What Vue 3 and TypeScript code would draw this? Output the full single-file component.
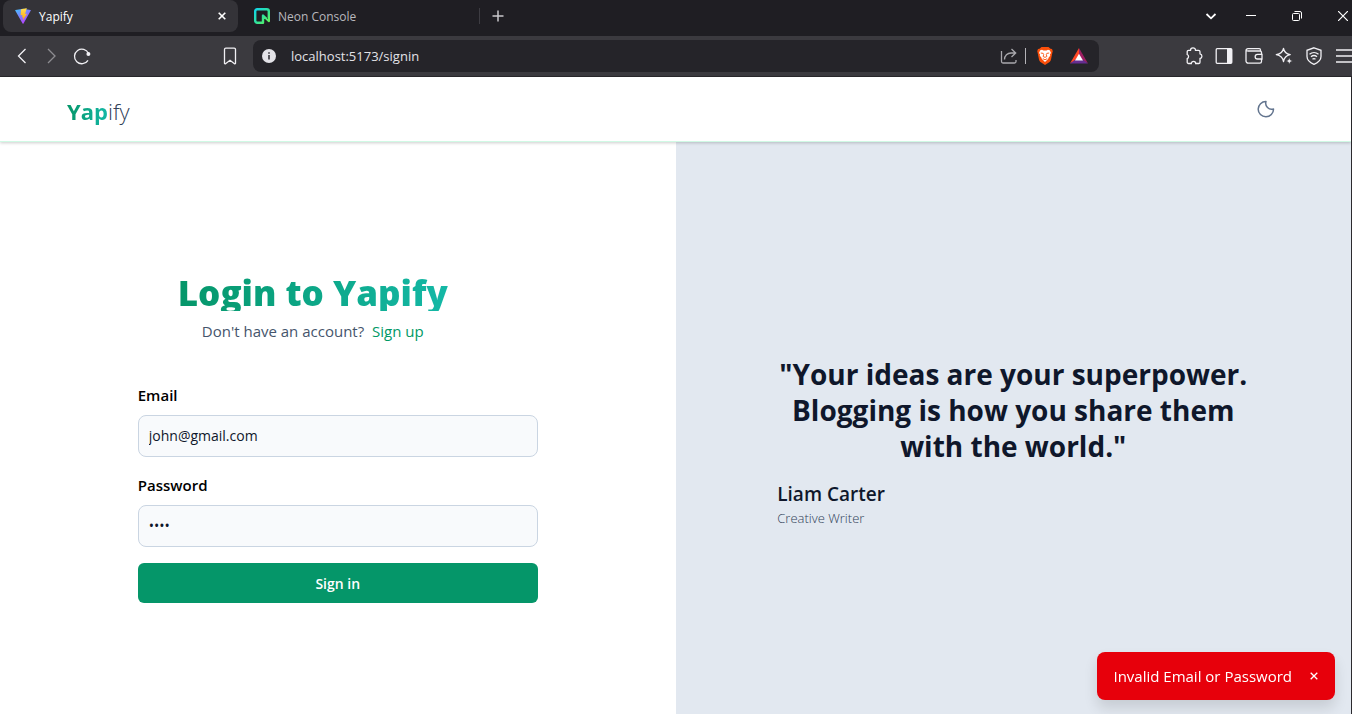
<script setup lang="ts">
import { ref } from 'vue'

const address = ref('localhost:5173/signin')
const email = ref('john@gmail.com')
const password = ref('john')
const toastOpen = ref(true)
</script>

<template>
  <div class="window">
    <div class="tab-strip">
      <div class="tab active">
        <svg class="favicon" viewBox="0 0 16 16" aria-hidden="true">
          <defs>
            <linearGradient id="vite-a" x1="0" y1="0" x2=".6" y2="1">
              <stop offset="0" stop-color="#41c5ff" />
              <stop offset="1" stop-color="#b83dfc" />
            </linearGradient>
            <linearGradient id="vite-b" x1="0" y1="0" x2="0" y2="1">
              <stop offset="0" stop-color="#ffdf55" />
              <stop offset="1" stop-color="#ffa40a" />
            </linearGradient>
          </defs>
          <path d="M.6 2 8 .8 15.500 2a.4.4 0 0 1 .3.6L8.500 15.400a.5.5 0 0 1-.9 0L.2 2.600A.4.4 0 0 1 .6 2Z" fill="url(#vite-a)" />
          <path d="m11.200.2-5 1a.3.3 0 0 0-.2.300l-.4 5.700 1.800-.2-.3 2.500 1.200-.3-.5 3.300 4.200-6.800-1.900.3 1.600-5.400a.3.3 0 0 0-.5-.400Z" fill="url(#vite-b)" />
        </svg>
        <span class="tab-title">Yapify</span>
        <button class="tab-close" type="button" aria-label="Close tab">
          <svg viewBox="0 0 8 8" width="8" height="8"><path d="m.7.7 6.600 6.600m0-6.600L.7 7.300" stroke="#fff" stroke-width="1.600" /></svg>
        </button>
      </div>
      <div class="tab">
        <svg class="favicon" viewBox="0 0 16 16" aria-hidden="true">
          <defs>
            <linearGradient id="neon" x1="0" y1="0" x2="1" y2="1">
              <stop offset="0" stop-color="#12d6e8" />
              <stop offset=".5" stop-color="#2ee0a0" />
              <stop offset="1" stop-color="#63f655" />
            </linearGradient>
          </defs>
          <path d="M9 14.800H3.200a2 2 0 0 1-2-2V3.200a2 2 0 0 1 2-2h9.600a2 2 0 0 1 2 2v9.800L9 7.500Z" fill="none" stroke="url(#neon)" stroke-width="2.400" stroke-linejoin="round" />
        </svg>
        <span class="tab-title">Neon Console</span>
      </div>
      <button class="new-tab" type="button" aria-label="New tab">
        <svg viewBox="0 0 12 12" width="12" height="12"><path d="M6 .5v11M.5 6h11" stroke="#c9c8cc" stroke-width="1.500" /></svg>
      </button>
      <div class="window-controls">
        <button class="tab-search" type="button" aria-label="Search tabs">
          <svg viewBox="0 0 12 12" width="12" height="12"><path d="m1.500 4 4.500 4.300L10.500 4" fill="none" stroke="#fff" stroke-width="1.800" /></svg>
        </button>
        <button type="button" aria-label="Minimize">
          <svg viewBox="0 0 10 10" width="10" height="10"><path d="M0 4.500h10" stroke="#fff" /></svg>
        </button>
        <button type="button" aria-label="Restore">
          <svg viewBox="0 0 10 10" width="10" height="10" fill="none" stroke="#fff"><rect x=".5" y="2.500" width="7" height="7" rx="1" /><path d="M2.500.5H8A1.500 1.500 0 0 1 9.500 2v5.500" /></svg>
        </button>
        <button type="button" aria-label="Close window">
          <svg viewBox="0 0 10 10" width="10" height="10"><path d="m0 0 10 10M10 0 0 10" stroke="#fff" stroke-width="1.200" /></svg>
        </button>
      </div>
    </div>

    <div class="toolbar">
      <nav class="nav-buttons" aria-label="Browser navigation">
        <button type="button" aria-label="Back">
          <svg viewBox="0 0 18 18"><path d="M12.500 2 5.500 9l7 7" /></svg>
        </button>
        <button type="button" aria-label="Forward" disabled>
          <svg viewBox="0 0 18 18"><path d="m5 2 7 7-7 7" /></svg>
        </button>
        <button type="button" aria-label="Reload">
          <svg viewBox="0 0 18 18"><path d="M15.500 6.500A7.300 7.300 0 1 0 15 13.300" /><circle cx="15.400" cy="7" r="2" fill="#f1f0f4" stroke="none" /></svg>
        </button>
        <button class="bookmark" type="button" aria-label="Bookmark">
          <svg viewBox="0 0 18 18"><path d="M3.500 2.500a1.300 1.300 0 0 1 1.300-1.300h8.400a1.300 1.300 0 0 1 1.300 1.300v13.700a.6.600 0 0 1-1 .5L9 13.200l-4.500 3.500a.6.600 0 0 1-1-.5Z" /></svg>
        </button>
      </nav>
      <div class="address">
        <svg class="info" viewBox="0 0 14 14" aria-hidden="true"><circle cx="7" cy="7" r="7" fill="#e3e2e7" /><path d="M7 6v4.500M7 3.200v1.600" stroke="#35343a" stroke-width="1.600" /></svg>
        <input v-model="address" class="url" type="text" aria-label="Address" />
        <button class="share" type="button" aria-label="Share">
          <svg viewBox="0 0 18 18"><path d="M1.500 4v10.500a1.500 1.500 0 0 0 1.500 1.500h11.500a1.500 1.500 0 0 0 1.500-1.500V13M4.500 12.500c0-4 3-6.500 6.500-6.500h4.500M11.500 2l4.200 4-4.200 4" /></svg>
        </button>
        <span class="divider"></span>
        <button type="button" aria-label="Brave Shields">
          <svg viewBox="0 0 18 18" class="solid">
            <path d="m5.500 0-2 1.800L2 2l-.8 2.200.4 1.300L3 12.500c.4 1.500 1 2.300 2.200 3.100L9 18l3.800-2.400c1.200-.8 1.800-1.600 2.200-3.100l1.400-7 .4-1.300L16 2l-1.500-.2-2-1.800Z" fill="#fb4f0a" />
            <path d="m6 2.800-1.800.4L3 6l1 1.200-.2 1.600 1.700 2 .2 1 1.500 1.400L9 15l1.800-1.800 1.500-1.400.2-1 1.700-2-.2-1.600L15 6l-1.200-2.800-1.800-.4-1.500.7h-3Z" fill="#fff" />
            <path d="m4.800 6 2.400.4.5 1.200-.6 1.900L9 10.400l1.900-.9-.6-1.900.5-1.200 2.400-.4M6.800 11.600 9 12.800l2.200-1.200" fill="none" stroke="#fb4f0a" stroke-width=".9" />
          </svg>
        </button>
        <button type="button" aria-label="Brave Rewards">
          <svg viewBox="0 0 18 18" class="solid">
            <path d="M9 1 0 16.500 9 11Z" fill="#ff4724" />
            <path d="m9 1 9 15.500L9 11Z" fill="#9e1f63" />
            <path d="M0 16.500h18L9 10Z" fill="#662d91" />
            <path d="m9 6.800 4 6.700H5Z" fill="#fff" />
          </svg>
        </button>
      </div>
      <div class="extensions">
        <button type="button" aria-label="Extensions">
          <svg viewBox="0 0 18 18"><path d="M5.500 3.300a2.500 2.500 0 0 1 5 0h3a1.500 1.500 0 0 1 1.500 1.500v2a2.400 2.400 0 0 1 0 4.700v3.700a1.300 1.300 0 0 1-1.300 1.300h-3a2.200 2.200 0 0 0-4.400 0H3.500a1.300 1.300 0 0 1-1.300-1.300v-3.500a2.300 2.300 0 0 0 0-4.200V4.600a1.300 1.300 0 0 1 1.300-1.300Z" /></svg>
        </button>
        <button type="button" aria-label="Side panel">
          <svg viewBox="0 0 18 18"><rect x="1.200" y="1.700" width="15.600" height="14.600" rx="1" /><path d="M12 2h5v14h-5Z" fill="#f1f0f4" stroke="none" /></svg>
        </button>
        <button type="button" aria-label="Wallet">
          <svg viewBox="0 0 18 18"><path d="M16.500 7V5.500A1.500 1.500 0 0 0 15 4H2.500m13 0V3A1.300 1.300 0 0 0 14.200 1.700H3A2 2 0 0 0 1 3.700V14a2.200 2.200 0 0 0 2.200 2.200h11.600a1.700 1.700 0 0 0 1.700-1.700V12M17 7.300h-4.500a2.300 2.300 0 0 0 0 4.700H17ZM1 3.500 2.500 4" /></svg>
        </button>
        <button type="button" aria-label="Leo AI">
          <svg viewBox="0 0 18 18"><path d="M8.500 1.300c.6 3.700 2 5.400 6.700 6.400-4.700 1-6.100 3-6.700 6.900-.6-3.900-2.500-5.900-7.200-6.900 4.700-1 6.600-2.700 7.200-6.400Z" stroke-linejoin="round" /><path d="m14.300 10.800 1 2.200 2.200 1-2.200 1-1 2.200-1-2.200-2.200-1 2.200-1Z" fill="#f1f0f4" stroke="#3b3a3f" stroke-width=".5" /></svg>
        </button>
        <button type="button" aria-label="VPN">
          <svg viewBox="0 0 18 18"><path d="m9 .8 7 2.500v6.200c0 3.500-3.500 6.300-7 7.800-3.500-1.500-7-4.300-7-7.800V3.300ZM4.500 7.300a7 7 0 0 1 9 0M6 9.800a4.600 4.600 0 0 1 6 0M7.500 12.200a2.300 2.300 0 0 1 3 0" /></svg>
        </button>
        <button type="button" aria-label="Menu">
          <svg viewBox="0 0 18 18"><path d="M1 3h17M1 9h17M1 15h17" /></svg>
        </button>
      </div>
    </div>

    <div class="page">
      <header class="site-header">
        <a class="brand" href="#"><span class="brand-strong">Yap</span>ify</a>
        <button class="theme" type="button" aria-label="Toggle dark mode">
          <svg viewBox="0 0 24 24" width="18" height="18"><path d="M12 2a8 8 0 0 0 10 10A10.200 10.200 0 1 1 12 2Z" /></svg>
        </button>
      </header>

      <main class="columns">
        <section class="signin">
          <div class="form-wrap">
            <div class="intro">
              <h1>Login to Yapify</h1>
              <p>Don't have an account? <a href="#">Sign up</a></p>
            </div>
            <form @submit.prevent="toastOpen = true">
              <label for="email">Email</label>
              <input id="email" v-model="email" type="email" />
              <label for="password">Password</label>
              <input id="password" v-model="password" type="password" />
              <button class="submit" type="submit">Sign in</button>
            </form>
          </div>
        </section>
        <section class="quote">
          <figure>
            <blockquote>"Your ideas are your superpower. Blogging is how you share them with the world."</blockquote>
            <figcaption>
              <span class="author">Liam Carter</span>
              <span class="role">Creative Writer</span>
            </figcaption>
          </figure>
        </section>
      </main>
    </div>

    <div v-if="toastOpen" class="toast" role="alert">
      <span>Invalid Email or Password</span>
      <button type="button" aria-label="Dismiss" @click="toastOpen = false">
        <svg viewBox="0 0 8 8" width="8" height="8"><path d="m.7.7 6.600 6.600m0-6.600L.7 7.300" stroke="#fff" stroke-width="1.300" /></svg>
      </button>
    </div>
  </div>
</template>

<style>
body {
  margin: 0;
}
</style>

<style scoped>
* {
  box-sizing: border-box;
}
.window {
  display: flex;
  flex-direction: column;
  min-height: 100vh;
  overflow: hidden;
  font-family: 'Segoe UI', 'Open Sans', 'Noto Sans', sans-serif;
  font-size: 15px;
  background: #2b2a2e;
}
button {
  display: flex;
  align-items: center;
  justify-content: center;
  padding: 0;
  border: 0;
  background: none;
  font-family: inherit;
  cursor: pointer;
}
a {
  text-decoration: none;
}

.tab-strip {
  display: flex;
  height: 36px;
  padding: 0 0 4px 3px;
  background: #1f1e23;
}
.tab {
  display: flex;
  align-items: center;
  width: 235px;
  padding: 0 12px;
  color: #b9b8bd;
  font-size: 12px;
}
.tab.active {
  border-radius: 8px;
  background: #343338;
  color: #fff;
}
.tab + .tab {
  width: 241px;
  padding-left: 16px;
}
.favicon {
  width: 16px;
  height: 16px;
  margin-right: 8px;
}
.tab-close {
  width: 8px;
  height: 16px;
  margin-left: auto;
}
.new-tab {
  align-self: center;
  width: 37px;
  height: 16px;
  border-left: 1px solid #3d3c42;
}
.window-controls {
  display: flex;
  margin: 0 -14px 0 auto;
}
.window-controls button {
  width: 46px;
}
.window-controls .tab-search {
  width: 34px;
}

.toolbar {
  display: flex;
  align-items: center;
  height: 41px;
  border-bottom: 1px solid #29282c;
  background: #3b3a3f;
}
.toolbar button {
  flex: none;
  width: 30px;
  height: 32px;
}
.toolbar svg {
  width: 18px;
  height: 18px;
  fill: none;
  stroke: #f1f0f4;
  stroke-width: 1.3;
}
.toolbar svg.solid {
  stroke: none;
}
.toolbar button:disabled {
  opacity: 0.45;
}
.nav-buttons {
  display: flex;
  width: 253px;
  padding: 0 8px 0 7px;
}
.nav-buttons .bookmark {
  margin-left: auto;
}
.address {
  display: flex;
  flex: 1;
  align-items: center;
  height: 32px;
  padding: 0 5px 0 9px;
  border-radius: 8px;
  background: #252429;
}
.toolbar .info {
  width: 14px;
  height: 14px;
  stroke: none;
}
.url {
  flex: 1;
  min-width: 0;
  margin-left: 15px;
  padding: 0;
  border: 0;
  outline: 0;
  background: none;
  color: #e3e2e7;
  font-family: inherit;
  font-size: 13px;
}
.toolbar .share svg {
  stroke: #a9a8ad;
}
.divider {
  width: 1px;
  height: 16px;
  margin: 0 4px 0 1px;
  background: #b4b3b8;
}
.address .divider + button {
  margin-right: 4px;
}
.extensions {
  display: flex;
  margin: 0 -7px 0 80px;
}

.page {
  display: flex;
  flex: 1;
  flex-direction: column;
  margin-right: 1px;
  background: #fff;
}
.site-header {
  position: relative;
  display: flex;
  align-items: center;
  justify-content: space-between;
  height: 65px;
  padding: 0 76px 0 67px;
  border-bottom: 1px solid #d0fae5;
  box-shadow: 0 1px 3px rgba(0, 0, 0, 0.2);
}
.brand {
  padding-top: 4px;
  color: #314158;
  font-size: 22px;
  font-weight: 300;
  line-height: 32px;
}
.brand-strong {
  background: linear-gradient(90deg, #059669, #14b8a6);
  background-clip: text;
  color: transparent;
  font-weight: 700;
}
.theme svg {
  fill: none;
  stroke: #62748e;
  stroke-width: 2;
  stroke-linecap: round;
  stroke-linejoin: round;
}

.columns {
  display: grid;
  flex: 1;
  grid-template-columns: 1fr 1fr;
}
.signin,
.quote {
  display: flex;
  align-items: center;
  justify-content: center;
  padding-top: 22px;
}
.form-wrap {
  width: 400px;
}
.intro {
  display: flex;
  flex-direction: column;
  align-items: center;
  width: 350px;
  margin-bottom: 40px;
}
h1 {
  margin: 0 0 8px;
  background: linear-gradient(90deg, #059669, #14b8a6);
  background-clip: text;
  color: transparent;
  font-size: 35px;
  font-weight: 800;
  line-height: 36px;
  white-space: nowrap;
}
.intro p {
  margin: 0;
  color: #45556c;
  line-height: 24px;
}
.intro a {
  margin-left: 4px;
  color: #009966;
}
form {
  display: flex;
  flex-direction: column;
}
label {
  margin-bottom: 8px;
  color: #000;
  font-weight: 600;
  line-height: 24px;
}
form input {
  height: 42px;
  margin-bottom: 16px;
  padding: 0 10px 2px;
  border: 1px solid #cad5e2;
  border-radius: 8px;
  outline: 0;
  background: #f8fafc;
  color: #0f172b;
  font-family: inherit;
  font-size: 14px;
}
.submit {
  height: 40px;
  border-radius: 6px;
  background: #059669;
  color: #fff;
  font-size: 14px;
  font-weight: 600;
}

.quote {
  padding-top: 28px;
  background: #e2e8f0;
  color: #0f172b;
}
figure {
  width: 472px;
  margin: 0;
}
blockquote {
  margin: 0;
  font-size: 28px;
  font-weight: 700;
  line-height: 36px;
  text-align: center;
}
figcaption {
  display: flex;
  flex-direction: column;
  margin-top: 16px;
}
.author {
  font-size: 19px;
  font-weight: 600;
  line-height: 28px;
}
.role {
  color: #314158;
  font-size: 13px;
  font-weight: 300;
  line-height: 20px;
}

.toast {
  position: fixed;
  right: 17px;
  bottom: 14px;
  display: flex;
  align-items: center;
  gap: 16px;
  height: 48px;
  padding: 0 16px;
  border-radius: 8px;
  background: #e7000b;
  box-shadow: 0 8px 14px rgba(0, 0, 0, 0.12);
  color: #fff;
}
.toast button {
  width: 11px;
  height: 16px;
}
</style>
